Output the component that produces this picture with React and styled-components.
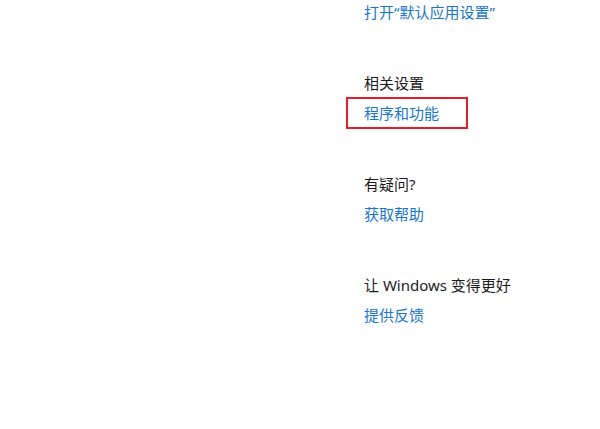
import React from "react";
import styled, { createGlobalStyle } from "styled-components";

const GlobalStyle = createGlobalStyle`
  html, body {
    margin: 0;
    padding: 0;
    background: #ffffff;
  }
  body {
    font-family: "Noto Sans", "Noto Sans CJK SC", sans-serif;
  }
`;

const Page = styled.div`
  width: 600px;
  height: 429px;
  box-sizing: border-box;
  padding: 2px 0 0 364px;
  display: flex;
  flex-direction: column;
  gap: 51px;
  overflow: hidden;
`;

const Section = styled.section`
  display: flex;
  flex-direction: column;
  align-items: flex-start;
  gap: 10px;
`;

const Heading = styled.div`
  font-size: 15px;
  line-height: 20px;
  color: #1b1b1b;
`;

const Link = styled.a`
  font-size: 15px;
  line-height: 20px;
  color: #1576cf;
  text-decoration: none;
  cursor: pointer;
`;

const Highlight = styled.div`
  display: inline-flex;
  border: 2px solid #e81b2b;
  padding: 4px 27px 4px 16px;
  margin: -6px 0 -6px -18px;
`;

const sections = [
  { title: "相关设置", link: "程序和功能", marked: true },
  { title: "有疑问?", link: "获取帮助" },
  { title: "让 Windows 变得更好", link: "提供反馈" },
];

const App = () => {
  return (
    <>
      <GlobalStyle />
      <Page>
        <Section>
          <Link>打开“默认应用设置”</Link>
        </Section>
        {sections.map((s) => (
          <Section key={s.title}>
            <Heading>{s.title}</Heading>
            {s.marked ? (
              <Highlight>
                <Link>{s.link}</Link>
              </Highlight>
            ) : (
              <Link>{s.link}</Link>
            )}
          </Section>
        ))}
      </Page>
    </>
  );
};

export default App;
